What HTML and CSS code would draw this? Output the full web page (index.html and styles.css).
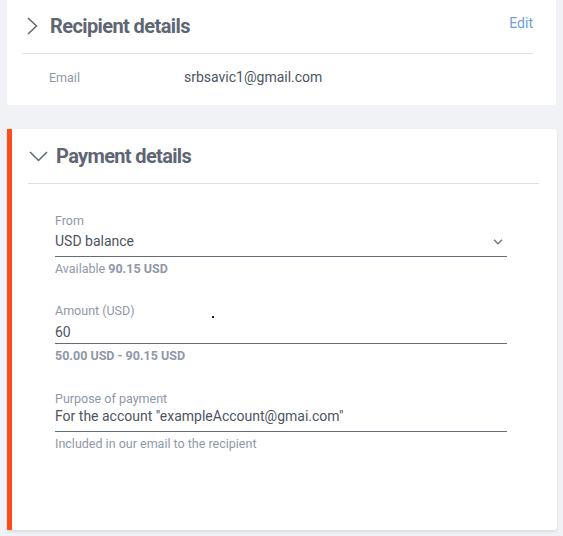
FILE: index.html
```html
<!DOCTYPE html>
<html lang="en">
<head>
<meta charset="utf-8">
<title>Transfer</title>
<link rel="stylesheet" href="styles.css">
</head>
<body>
<section class="card card-recipient">
  <div class="card-head">
    <svg class="chev-right" width="11" height="18" viewBox="0 0 11 18"><path d="M1 1 L9.5 9 L1 17" fill="none" stroke="#5f6673" stroke-width="1.5"/></svg>
    <h2 class="card-title">Recipient details</h2>
    <a class="edit-link">Edit</a>
  </div>
  <div class="info-row">
    <span class="info-label">Email</span>
    <span class="info-value">srbsavic1@gmail.com</span>
  </div>
</section>

<section class="card card-payment">
  <div class="card-head head-payment">
    <svg class="chev-down" width="19" height="11" viewBox="0 0 19 11"><path d="M1 1 L9.5 9.5 L18 1" fill="none" stroke="#5f6673" stroke-width="1.5"/></svg>
    <h2 class="card-title">Payment details</h2>
  </div>
  <div class="form">
    <div class="field field-from">
      <div class="field-label">From</div>
      <div class="field-input select">
        <span>USD balance</span>
        <svg class="sel-chev" width="10" height="6" viewBox="0 0 10 6"><path d="M1 0.8 L5 4.8 L9 0.8" fill="none" stroke="#6b7280" stroke-width="1.3"/></svg>
      </div>
      <div class="field-help">Available <b>90.15 USD</b></div>
    </div>
    <div class="field field-amount">
      <div class="field-label">Amount (USD)</div>
      <span class="dot"></span>
      <div class="field-input input-amount">60</div>
      <div class="field-help help-amount"><b>50.00 USD - 90.15 USD</b></div>
    </div>
    <div class="field field-purpose">
      <div class="field-label">Purpose of payment</div>
      <div class="field-input input-purpose">For the account "exampleAccount@gmai.com"</div>
      <div class="field-help">Included in our email to the recipient</div>
    </div>
  </div>
</section>
</body>
</html>
```

FILE: styles.css
```css
* { box-sizing: border-box; }
html, body { margin: 0; padding: 0; }
body {
  background: #f1f2f6;
  font-family: Roboto, "Noto Sans", Arial, sans-serif;
  color: #4d5562;
  width: 563px;
  height: 536px;
  overflow: hidden;
}
.card {
  background: #fff;
  margin-left: 7px;
}
.card-recipient {
  width: 549px;
  height: 105px;
  padding: 0 23px 0 15px;
  border-radius: 0 0 3px 3px;
}
.card-head {
  display: flex;
  align-items: center;
  padding: 14px 0 15px;
  border-bottom: 1px solid #dedfe7;
}
.chev-right { margin-left: 5px; margin-right: 12px; flex: none; }
.card-title {
  margin: 0;
  font-size: 20px;
  line-height: 24px;
  font-weight: 700;
  letter-spacing: -0.6px;
  color: #5f6673;
  flex: 1;
}
.edit-link {
  align-self: flex-start;
  margin-top: -1px;
  font-size: 14px;
  line-height: 20px;
  color: #6d9fd4;
}
.info-row {
  display: flex;
  align-items: baseline;
  padding: 13px 0 0 27px;
}
.info-label {
  width: 135px;
  font-size: 12.5px;
  line-height: 14px;
  color: #8f98a8;
}
.info-value {
  font-size: 14px;
  line-height: 20px;
  color: #4d5562;
}
.card-payment {
  margin-top: 24px;
  width: 550px;
  height: 401px;
  border-left: 5px solid #ff4a1a;
  border-radius: 0 3px 3px 0;
  box-shadow: 0 2px 3px rgba(120, 125, 140, 0.18);
}
.head-payment {
  margin: 0 18px 0 16px;
  padding: 15px 0 15px;
}
.head-payment .card-title { letter-spacing: -0.65px; }
.chev-down { margin-left: 1px; margin-right: 8px; flex: none; }
.form {
  padding: 30px 0 0 43px;
  width: 495px;
}
.field { position: relative; }
.field-label {
  font-size: 12.5px;
  line-height: 14px;
  color: #8f98a8;
}
.field-input {
  font-size: 14px;
  line-height: 20px;
  color: #4d5562;
  border-bottom: 1px solid #656c78;
}
.select {
  margin-top: 3px;
  padding-bottom: 5px;
  display: flex;
  align-items: center;
  justify-content: space-between;
}
.sel-chev { margin-right: 4px; margin-top: 1px; }
.input-amount {
  margin-top: 4px;
  padding-bottom: 1px;
}
.input-purpose {
  margin-top: 0;
  padding-bottom: 5px;
}
.field-help {
  margin-top: 5px;
  font-size: 12.5px;
  line-height: 14px;
  color: #8f98a8;
}
.field-help b { font-weight: 700; }
.field-amount { margin-top: 28px; }
.field-purpose { margin-top: 29px; }
.dot {
  position: absolute;
  left: 157px;
  top: 12px;
  width: 2px;
  height: 2px;
  background: #222;
}
```
